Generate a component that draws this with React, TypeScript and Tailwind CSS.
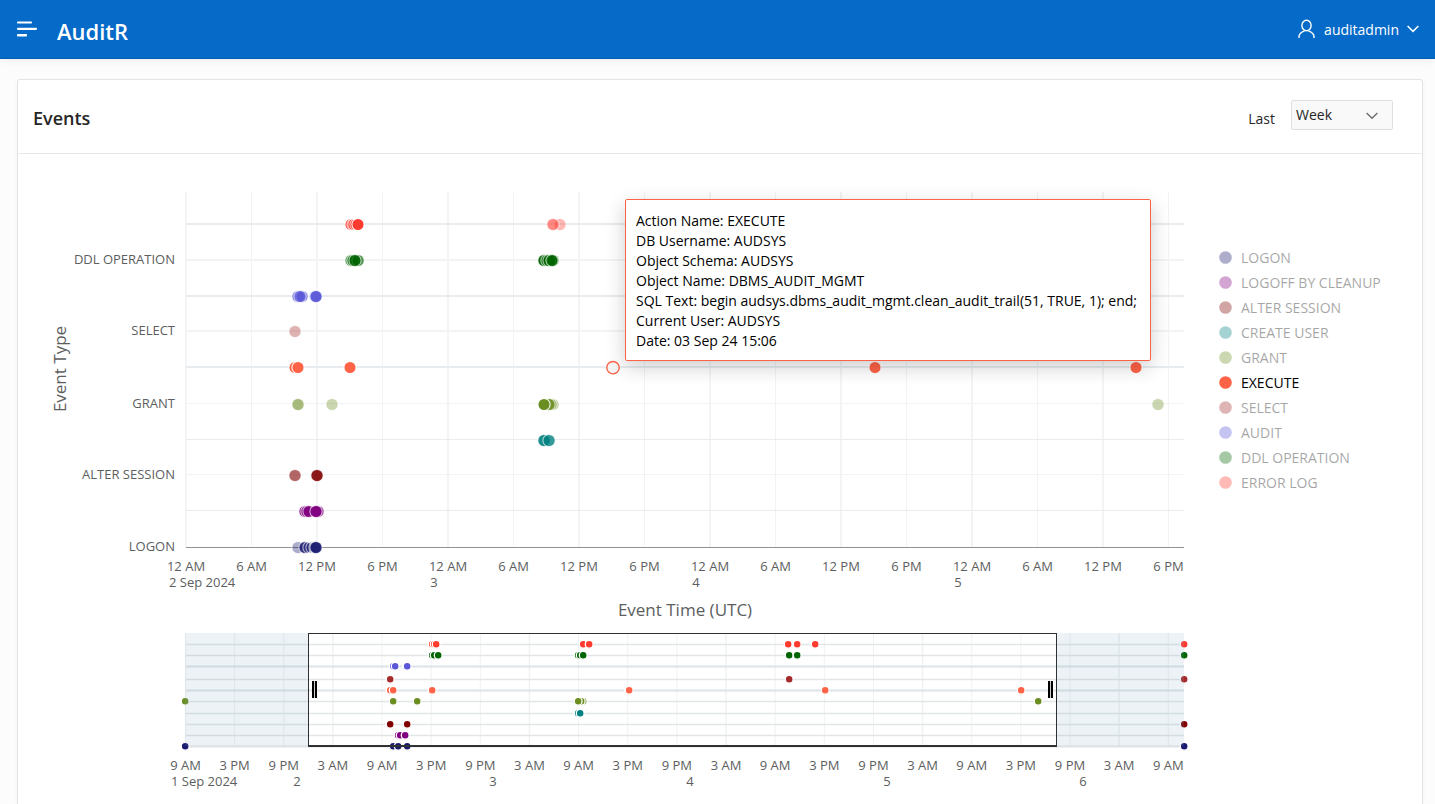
import { useState } from "react";

type Mark = { x: number; color: string; opacity?: number; hollow?: boolean };

const font = "font-['Open_Sans','Noto_Sans',sans-serif]";

const C = {
  logon: "#191970",
  logoff: "#800080",
  alter: "#800000",
  create: "#008080",
  grant: "#6b8e23",
  execute: "#ff6347",
  select: "#a52a2a",
  audit: "#5a57d8",
  ddl: "#006400",
  error: "#ff3b30",
};

const legend = [
  { name: "LOGON", color: C.logon },
  { name: "LOGOFF BY CLEANUP", color: C.logoff },
  { name: "ALTER SESSION", color: C.alter },
  { name: "CREATE USER", color: C.create },
  { name: "GRANT", color: C.grant },
  { name: "EXECUTE", color: C.execute, active: true },
  { name: "SELECT", color: C.select },
  { name: "AUDIT", color: C.audit },
  { name: "DDL OPERATION", color: C.ddl },
  { name: "ERROR LOG", color: C.error },
];

const marks = (color: string, points: [number, number][]): Mark[] =>
  points.map(([x, opacity]) => ({ x, color, opacity }));

const rows: { y: number; label?: string; marks: Mark[] }[] = [
  {
    y: 224,
    marks: marks(C.error, [[351, 1], [353, 0.1], [354, 0.1], [356, 0.1], [358, 1], [560, 0.36], [553, 0.6]]),
  },
  {
    y: 260,
    label: "DDL OPERATION",
    marks: marks(C.ddl, [[351, 0.6], [353, 0.7], [358, 0.7], [355, 0.8], [544, 0.95], [547, 0.9], [549, 0.9], [553, 0.7], [552, 0.8]]),
  },
  { y: 296, marks: marks(C.audit, [[298, 0.75], [302, 0.8], [300, 0.7], [315, 0.4], [316, 0.95]]) },
  { y: 331, label: "SELECT", marks: marks(C.select, [[295, 0.36]]) },
  {
    y: 367,
    marks: [
      ...marks(C.execute, [[295, 1], [298, 1], [350, 1], [875, 1], [1136, 1]]),
      { x: 613, color: C.execute, hollow: true },
    ],
  },
  {
    y: 404,
    label: "GRANT",
    marks: marks(C.grant, [[298, 0.6], [332, 0.36], [553, 0.45], [551, 0.45], [549, 0.85], [544, 1], [1158, 0.36]]),
  },
  { y: 440, marks: marks(C.create, [[544, 0.9], [549, 0.8]]) },
  { y: 475, label: "ALTER SESSION", marks: marks(C.alter, [[295, 0.6], [317, 0.9]]) },
  { y: 511, marks: marks(C.logoff, [[305, 0.85], [307, 0.7], [309, 0.7], [318, 0.75], [316, 0.95]]) },
  { y: 547, label: "LOGON", marks: marks(C.logon, [[298, 0.36], [305, 0.85], [309, 0.2], [312, 0.2], [315, 0.6], [316, 0.9]]) },
];

const overview: { y: number; color: string; xs: number[] }[] = [
  { y: 644, color: C.error, xs: [432, 434, 436, 583, 589, 788, 797, 815, 1184] },
  { y: 655, color: C.ddl, xs: [432, 434, 438, 578, 580, 583, 789, 797, 1184] },
  { y: 666, color: C.audit, xs: [393, 395, 406, 407] },
  { y: 679, color: C.select, xs: [390, 789, 1184] },
  { y: 690, color: C.execute, xs: [390, 393, 432, 628, 629, 825, 1021] },
  { y: 701, color: C.grant, xs: [185, 393, 417, 583, 581, 578, 1038] },
  { y: 713, color: C.create, xs: [578, 580] },
  { y: 724, color: C.alter, xs: [390, 407, 1184] },
  { y: 735, color: C.logoff, xs: [398, 400, 405] },
  { y: 746, color: C.logon, xs: [185, 393, 398, 407, 1184] },
];

const hours = ["12 AM", "6 AM", "12 PM", "6 PM"];
const ticks = Array.from({ length: 16 }, (_, i) => ({
  x: 186 + i * 65.5,
  label: hours[i % 4],
}));
const days = [
  { x: 434, label: "3" },
  { x: 696, label: "4" },
  { x: 958, label: "5" },
];

const miniHours = ["9 AM", "3 PM", "9 PM", "3 AM"];
const miniTicks = Array.from({ length: 21 }, (_, i) => ({
  x: 185.5 + i * 49.14,
  label: miniHours[i % 4],
}));
const miniDays = [
  { x: 297, label: "2" },
  { x: 493, label: "3" },
  { x: 690, label: "4" },
  { x: 887, label: "5" },
  { x: 1083, label: "6" },
];

const details = [
  "Action Name: EXECUTE",
  "DB Username: AUDSYS",
  "Object Schema: AUDSYS",
  "Object Name: DBMS_AUDIT_MGMT",
  "SQL Text: begin audsys.dbms_audit_mgmt.clean_audit_trail(51, TRUE, 1); end;",
  "Current User: AUDSYS",
  "Date: 03 Sep 24 15:06",
];

function Dot({ mark, y }: { mark: Mark; y: number }) {
  if (mark.hollow) {
    return (
      <g>
        <circle cx={mark.x} cy={y + 0.7} r={7.2} fill="#fff" />
        <circle cx={mark.x} cy={y + 0.7} r={6.2} fill="#f6f5f5" stroke={mark.color} strokeWidth={1.4} />
      </g>
    );
  }
  return (
    <circle
      cx={mark.x}
      cy={y + 0.5}
      r={6.1}
      fill={mark.color}
      fillOpacity={mark.opacity}
      stroke="#fff"
      strokeOpacity={mark.opacity === 1 ? 0.95 : 0.65}
      strokeWidth={1.1}
    />
  );
}

function MainPlot() {
  return (
    <g>
      {ticks.map((t, i) => (
        <line key={t.x} x1={t.x} x2={t.x} y1={192} y2={547} stroke={i % 2 ? "#f2f3f4" : "#f3f4f5"} strokeWidth={i % 2 ? 1 : 2} />
      ))}
      {rows.slice(0, 9).map((r, i) => (
        <line
          key={r.y}
          x1={186}
          x2={1184}
          y1={i < 5 ? r.y : r.y - 0.5}
          y2={i < 5 ? r.y : r.y - 0.5}
          stroke={i % 2 ? "#f2f3f4" : "#e8ecef"}
          strokeWidth={i < 5 ? 2 : 1}
        />
      ))}
      <line x1={186} x2={1184} y1={547.5} y2={547.5} stroke="#8f9193" />
      {rows.map((r) => (
        <g key={r.y}>
          {r.label && (
            <text x={175} y={r.y + 4} textAnchor="end" className="fill-[#5c5e60] text-[13px]">
              {r.label}
            </text>
          )}
          {r.marks.map((m, i) => (
            <Dot key={i} mark={m} y={r.y} />
          ))}
        </g>
      ))}
      <g className="fill-[#5c5e60] text-[13px]" textAnchor="middle">
        {ticks.map((t) => (
          <text key={t.x} x={t.x} y={571}>{t.label}</text>
        ))}
        <text x={169} y={587} textAnchor="start">2 Sep 2024</text>
        {days.map((d) => (
          <text key={d.x} x={d.x} y={587}>{d.label}</text>
        ))}
      </g>
      <g className="fill-[#5c5e60] text-[17px]" textAnchor="middle">
        <text x={685} y={616}>Event Time (UTC)</text>
        <text transform="translate(66 369) rotate(-90)">Event Type</text>
      </g>
    </g>
  );
}

function Handle({ x }: { x: number }) {
  return (
    <g>
      <rect x={x} y={681} width={5} height={17} fill="#ccc" />
      <rect x={x} y={681} width={2} height={17} />
      <rect x={x + 3} y={681} width={2} height={17} />
    </g>
  );
}

function Overview() {
  return (
    <g>
      {miniTicks.map((t, i) => (
        <line key={t.x} x1={t.x} x2={t.x} y1={633} y2={746} stroke="#f0f1f3" strokeWidth={i % 4 === 3 ? 1.5 : 1} />
      ))}
      {overview.slice(0, 9).map((r, i) => (
        <line key={r.y} x1={186} x2={1184} y1={r.y + 0.5} y2={r.y + 0.5} stroke={i === 2 || i === 4 ? "#dde3e8" : "#e1e5e8"} strokeWidth={i === 2 || i === 4 ? 2 : 1.3} />
      ))}
      <line x1={186} x2={1184} y1={746.5} y2={746.5} stroke="#dfe2e5" strokeWidth={2} />
      {overview.map((r) =>
        r.xs.map((x, i) => (
          <circle key={`${r.y}-${i}`} cx={x + 0.2} cy={r.y + 0.3} r={3.9} fill={r.color} stroke="#fff" strokeWidth={1.3} />
        )),
      )}
      <rect x={185} y={633} width={123} height={113} fill="#82abc4" fillOpacity={0.15} />
      <rect x={1057} y={633} width={127} height={113} fill="#82abc4" fillOpacity={0.15} />
      <rect x={308.5} y={633.5} width={748} height={113} fill="none" stroke="#2f3133" />
      <line x1={308} x2={1057} y1={746} y2={746} stroke="#2f3133" strokeWidth={2} />
      <Handle x={312} />
      <Handle x={1048} />
      <g className="fill-[#5c5e60] text-[13px]" textAnchor="middle">
        {miniTicks.map((t) => (
          <text key={t.x} x={t.x} y={770}>{t.label}</text>
        ))}
        <text x={171} y={786} textAnchor="start">1 Sep 2024</text>
        {miniDays.map((d) => (
          <text key={d.x} x={d.x} y={786}>{d.label}</text>
        ))}
      </g>
    </g>
  );
}

export default function App() {
  const [range, setRange] = useState("Week");
  return (
    <div className={`min-h-screen bg-[#fcfcfc] text-[#262626] ${font}`}>
      <header className="relative flex h-[59px] items-center border-b border-[#055cb2] bg-[#056ac8] pr-4 pl-4 text-white shadow-[0_2px_8px_rgba(0,0,0,0.06)]">
        <button type="button" aria-label="Main navigation" className="mr-5">
          <svg width="21" height="16" viewBox="0 0 21 16" fill="currentColor" className="block">
            <rect x="1" y="0.5" width="15" height="2.1" rx="0.8" />
            <rect x="1" y="6.8" width="20" height="2.1" rx="0.8" />
            <rect x="1" y="12.9" width="10" height="2.6" rx="0.8" />
          </svg>
        </button>
        <a href="#home" className="pt-1 text-[22px] font-semibold">AuditR</a>
        <button type="button" className="ml-auto flex items-center text-[14px]">
          <svg width="18" height="20" viewBox="0 0 18 20" fill="none" stroke="currentColor" strokeWidth="1.4" className="mr-2">
            <ellipse cx="8.5" cy="6.5" rx="4.6" ry="5.3" />
            <path d="M1 19v-1.2c0-3 2.2-4.6 5.6-5.9M16 19v-1.2c0-3-2.2-4.6-5.6-5.9" />
          </svg>
          auditadmin
          <svg width="12" height="8" viewBox="0 0 12 8" fill="none" stroke="currentColor" strokeWidth="1.5" className="ml-2">
            <path d="M0.6 1l5.4 5.4L11.4 1" />
          </svg>
        </button>
      </header>

      <main className="pt-5 pr-3 pl-[17px]">
        <section className="rounded-t-[3px] border border-b-0 border-[#e4e4e4] bg-white shadow-[0_1px_4px_rgba(0,0,0,0.04)]">
          <div className="flex h-[74px] items-center justify-between border-b border-[#e8e8e8] pr-[29px] pl-[15px]">
            <h2 className="pt-1 text-[18px] font-semibold">Events</h2>
            <div className="flex items-center gap-4 text-[14px]">
              <label htmlFor="range" className="pt-1">Last</label>
              <div className="relative">
                <select
                  id="range"
                  value={range}
                  onChange={(e) => setRange(e.target.value)}
                  className="mb-1 block h-[30px] w-[102px] appearance-none rounded-[2px] border border-[#dfdfdf] bg-[#f9f9f9] pl-1"
                >
                  <option>Day</option>
                  <option>Week</option>
                  <option>Month</option>
                </select>
                <svg width="12" height="8" viewBox="0 0 12 8" fill="none" stroke="#6e6e6e" strokeWidth="1.4" className="pointer-events-none absolute top-3 right-[15px]">
                  <path d="M0.6 1l5.4 5.2L11.4 1" />
                </svg>
              </div>
            </div>
          </div>

          <div className="flex">
            <div className="relative min-w-0 flex-1">
              <svg viewBox="18 154 1190 650" className="block w-full" role="img" aria-label="Events by type over time">
                <MainPlot />
                <Overview />
              </svg>
              <div
                role="tooltip"
                className="absolute top-[45px] left-[607px] min-w-[526px] rounded-[2px] border border-[#ff6347] bg-white px-[10px] pt-[11px] pb-[9px] text-[14px] leading-5 whitespace-nowrap text-black shadow-[0_6px_20px_rgba(0,0,0,0.2)]"
              >
                {details.map((d) => (
                  <div key={d}>{d}</div>
                ))}
              </div>
            </div>
            <ul className="w-[214px] shrink-0 pt-[91px] pl-[11px]">
              {legend.map((l) => (
                <li key={l.name}>
                  <button type="button" className={l.active ? "flex h-[25px] items-center gap-2 text-[14px] text-black" : "flex h-[25px] items-center gap-2 text-[14px] text-black opacity-35"}>
                    <svg width="14" height="14" viewBox="0 0 14 14">
                      <circle cx="6.5" cy="6.5" r="6.3" fill={l.color} />
                    </svg>
                    {l.name}
                  </button>
                </li>
              ))}
            </ul>
          </div>
        </section>
      </main>
    </div>
  );
}
